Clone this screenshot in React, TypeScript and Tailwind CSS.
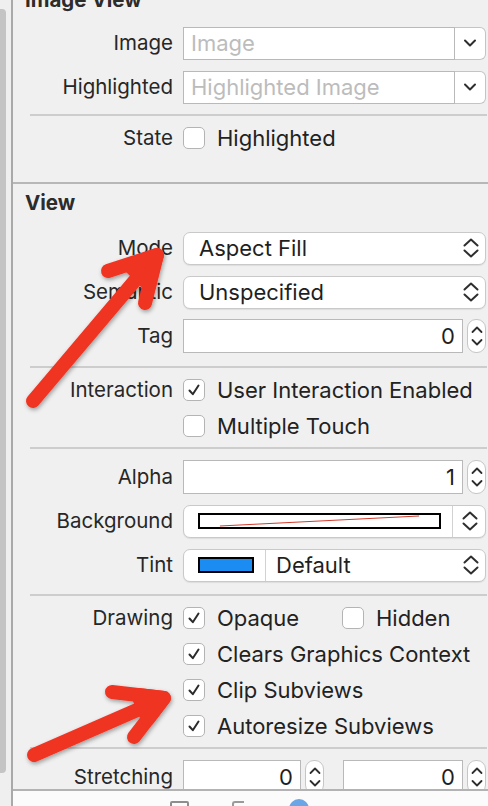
import React from "react";

const UpDown = ({ small = false }: { small?: boolean }) =>
  small ? (
    <svg width="14" height="24" viewBox="0 0 14 24">
      <path d="M2.5 8 L7 3.5 L11.5 8 M2.5 16 L7 20.5 L11.5 16" stroke="#2e2e2e" strokeWidth="1.8" fill="none" strokeLinecap="round" strokeLinejoin="round" />
    </svg>
  ) : (
    <svg width="16" height="20" viewBox="0 0 16 20">
      <path d="M1.5 7.5 L8 1.5 L14.5 7.5 M1.5 12.5 L8 18.5 L14.5 12.5" stroke="#2e2e2e" strokeWidth="2" fill="none" strokeLinecap="round" strokeLinejoin="round" />
    </svg>
  );

const Chevron = () => (
  <svg width="14" height="10" viewBox="0 0 14 10">
    <path d="M2 2.5 L7 7.5 L12 2.5" stroke="#2e2e2e" strokeWidth="2" fill="none" strokeLinecap="round" strokeLinejoin="round" />
  </svg>
);

const Check = () => (
  <svg width="16" height="16" viewBox="0 0 16 16">
    <path d="M3.5 8.5 L6.8 12.2 L12.5 3.5" stroke="#2b2b2b" strokeWidth="2" fill="none" strokeLinecap="round" strokeLinejoin="round" />
  </svg>
);

const Box = ({ checked }: { checked?: boolean }) => (
  <div className="w-[22px] h-[22px] shrink-0 rounded-[5px] bg-white border border-[#b4b4b4] flex items-center justify-center">
    {checked ? <Check /> : null}
  </div>
);

const Row = ({ label, tall, children }: { label?: string; tall?: boolean; children?: React.ReactNode }) => (
  <div className={tall ? "flex items-center h-[44px] shrink-0" : "flex items-center h-[36px] shrink-0"}>
    <div className="w-[160px] shrink-0 text-right text-[20.5px] leading-none text-[#272727]">{label}</div>
    <div className="ml-[10px] w-[303px] shrink-0 flex items-center">{children}</div>
  </div>
);

const CheckLine = ({ checked, text }: { checked?: boolean; text: string }) => (
  <div className="flex items-center">
    <Box checked={checked} />
    <span className="ml-[12px] text-[22px] leading-none text-[#222]">{text}</span>
  </div>
);

const Combo = ({ placeholder }: { placeholder: string }) => (
  <div className="flex w-full h-[33px]">
    <div className="flex-1 bg-white border border-[#b9b9b9] flex items-center pl-[7px] text-[22px] leading-none text-[#bcbcbc]">{placeholder}</div>
    <div className="w-[31px] bg-white border border-l-0 border-[#c4c4c4] rounded-r-[6px] flex items-center justify-center">
      <Chevron />
    </div>
  </div>
);

const Popup = ({ text }: { text: string }) => (
  <div className="w-full h-[33px] bg-white rounded-[7px] border border-[#c9c9c9] shadow-[0_1px_1px_rgba(0,0,0,0.08)] flex items-center pl-[15px] pr-[6px]">
    <span className="flex-1 text-[22px] leading-none text-[#1f1f1f]">{text}</span>
    <UpDown />
  </div>
);

const Stepper = () => (
  <div className="w-[19px] h-[34px] bg-white rounded-[9px] border border-[#c6c6c6] flex items-center justify-center shrink-0">
    <UpDown small />
  </div>
);

const NumField = ({ value, w }: { value: string; w: string }) => (
  <div className={w + " h-[34px] bg-white border border-[#b9b9b9] flex items-center justify-end pr-[7px] text-[22px] leading-none text-[#1f1f1f]"}>{value}</div>
);

const Sep = ({ block, top }: { block: string; top: string }) => (
  <div className={block + " shrink-0"}>
    <div className={top + " ml-[17px] mr-[1px] h-[2px] bg-[#cdcdcd]"} />
  </div>
);

export default function App() {
  return (
    <div className="relative w-[488px] h-[806px] overflow-hidden flex bg-[#f0f0f0] font-['Inter','Noto_Sans',sans-serif]">
      {/* left scroller area */}
      <div className="w-[11px] shrink-0 flex flex-col bg-[#efefef]">
        <div className="mt-[9px] h-[764px] w-[6px] bg-[#c4c4c4] rounded-r-[4px]" />
      </div>
      <div className="w-[2px] shrink-0 bg-[#a9a9a9]" />
      {/* main */}
      <div className="flex-1 flex flex-col">
        <div className="h-[789px] shrink-0 overflow-hidden bg-[#f0f0f0]">
          <div className="flex flex-col -mt-[11px]">
            <div className="h-[22px] shrink-0 flex items-center pl-[12px] text-[20.5px] font-bold leading-none text-[#2c2c2c]">Image View</div>
            <div className="h-[10px] shrink-0" />
            <Row label="Image" tall><Combo placeholder="Image" /></Row>
            <Row label="Highlighted" tall><Combo placeholder="Highlighted Image" /></Row>
            <Sep block="h-[11px]" top="mt-[5px]" />
            <Row label="State"><CheckLine text="Highlighted" /></Row>
            <div className="h-[26px] shrink-0" />
            <div className="h-[2px] shrink-0 bg-[#b7b7b7]" />
            <div className="h-[8px] shrink-0" />
            <div className="h-[22px] shrink-0 flex items-center pl-[12px] text-[20.5px] font-bold leading-none text-[#2c2c2c]">View</div>
            <div className="h-[12px] shrink-0" />
            <Row label="Mode" tall><Popup text="Aspect Fill" /></Row>
            <Row label="Semantic" tall><Popup text="Unspecified" /></Row>
            <Row label="Tag" tall>
              <NumField value="0" w="w-[280px]" />
              <div className="ml-[4px]"><Stepper /></div>
            </Row>
            <Sep block="h-[14px]" top="mt-[8px]" />
            <Row label="Interaction"><CheckLine checked text="User Interaction Enabled" /></Row>
            <Row><CheckLine text="Multiple Touch" /></Row>
            <Sep block="h-[11px]" top="mt-[3px]" />
            <Row label="Alpha" tall>
              <NumField value="1" w="w-[280px]" />
              <div className="ml-[4px]"><Stepper /></div>
            </Row>
            <Row label="Background" tall>
              <div className="w-full h-[33px] bg-white rounded-[7px] border border-[#c9c9c9] shadow-[0_1px_1px_rgba(0,0,0,0.08)] flex items-center">
                <div className="w-[268px] shrink-0 h-full flex items-center pl-[14px] pr-[11px]">
                  <div className="relative flex-1 h-[16px] border-2 border-black bg-white overflow-hidden">
                    <svg className="absolute inset-0" width="100%" height="100%" viewBox="0 0 240 12" preserveAspectRatio="none">
                      <line x1="20" y1="11" x2="220" y2="1" stroke="#d23a2a" strokeWidth="1" />
                    </svg>
                  </div>
                </div>
                <div className="w-[1px] h-full bg-[#d2d2d2]" />
                <div className="flex-1 flex justify-center pl-[2px]"><UpDown /></div>
              </div>
            </Row>
            <Row label="Tint" tall>
              <div className="w-full h-[33px] bg-white rounded-[7px] border border-[#c9c9c9] shadow-[0_1px_1px_rgba(0,0,0,0.08)] flex items-center">
                <div className="w-[81px] shrink-0 h-full flex items-center pl-[14px]">
                  <div className="w-[56px] h-[16px] border-2 border-black bg-[#1b8cf2]" />
                </div>
                <div className="w-[1px] h-full bg-[#d2d2d2]" />
                <span className="flex-1 pl-[10px] text-[22px] leading-none text-[#1f1f1f]">Default</span>
                <div className="pr-[6px]"><UpDown /></div>
              </div>
            </Row>
            <Sep block="h-[13px]" top="mt-[7px]" />
            <Row label="Drawing">
              <div className="w-[159px] shrink-0"><CheckLine checked text="Opaque" /></div>
              <CheckLine text="Hidden" />
            </Row>
            <Row><CheckLine checked text="Clears Graphics Context" /></Row>
            <Row><CheckLine checked text="Clip Subviews" /></Row>
            <Row><CheckLine checked text="Autoresize Subviews" /></Row>
            <Sep block="h-[11px]" top="mt-[3px]" />
            <Row label="Stretching" tall>
              <NumField value="0" w="w-[118px]" />
              <div className="ml-[4px]"><Stepper /></div>
              <div className="ml-[19px]"><NumField value="0" w="w-[120px]" /></div>
              <div className="ml-[4px]"><Stepper /></div>
            </Row>
          </div>
        </div>
        <div className="flex-1 bg-[#fbfbfb] border-t-2 border-[#b3b3b3] flex items-start overflow-hidden">
          <div className="ml-[157px] mt-[10px] w-[19px] h-[14px] border-2 border-[#8e8e8e] rounded-[2px]" />
          <div className="ml-[43px] mt-[10px] w-[12px] h-[6px] border-t-2 border-l-2 border-[#9a9a9a] rounded-tl-[3px]" />
          <div className="ml-[45px] mt-[8px] w-[20px] h-[20px] rounded-full bg-[#6aa6e6]" />
        </div>
      </div>

      {/* annotation arrows */}
      <svg className="absolute inset-0 pointer-events-none" width="488" height="806" viewBox="0 0 488 806">
        <defs>
          <filter id="sh" x="-20%" y="-20%" width="140%" height="140%">
            <feDropShadow dx="1" dy="2" stdDeviation="2" floodColor="#000" floodOpacity="0.35" />
          </filter>
        </defs>
        <g filter="url(#sh)" stroke="#ef3424" strokeWidth="14" fill="#ef3424" strokeLinecap="round" strokeLinejoin="round">
          <path d="M33 401 L154 258" fill="none" />
          <path d="M108 271 L157 255 L145 303" fill="none" />
          <path d="M130 266 L157 255 L148 284 Z" />
          <path d="M34 755 L160 700" fill="none" />
          <path d="M112 692 L164 698 L134 737" fill="none" />
          <path d="M138 695 L164 698 L148 719 Z" />
        </g>
      </svg>
    </div>
  );
}
